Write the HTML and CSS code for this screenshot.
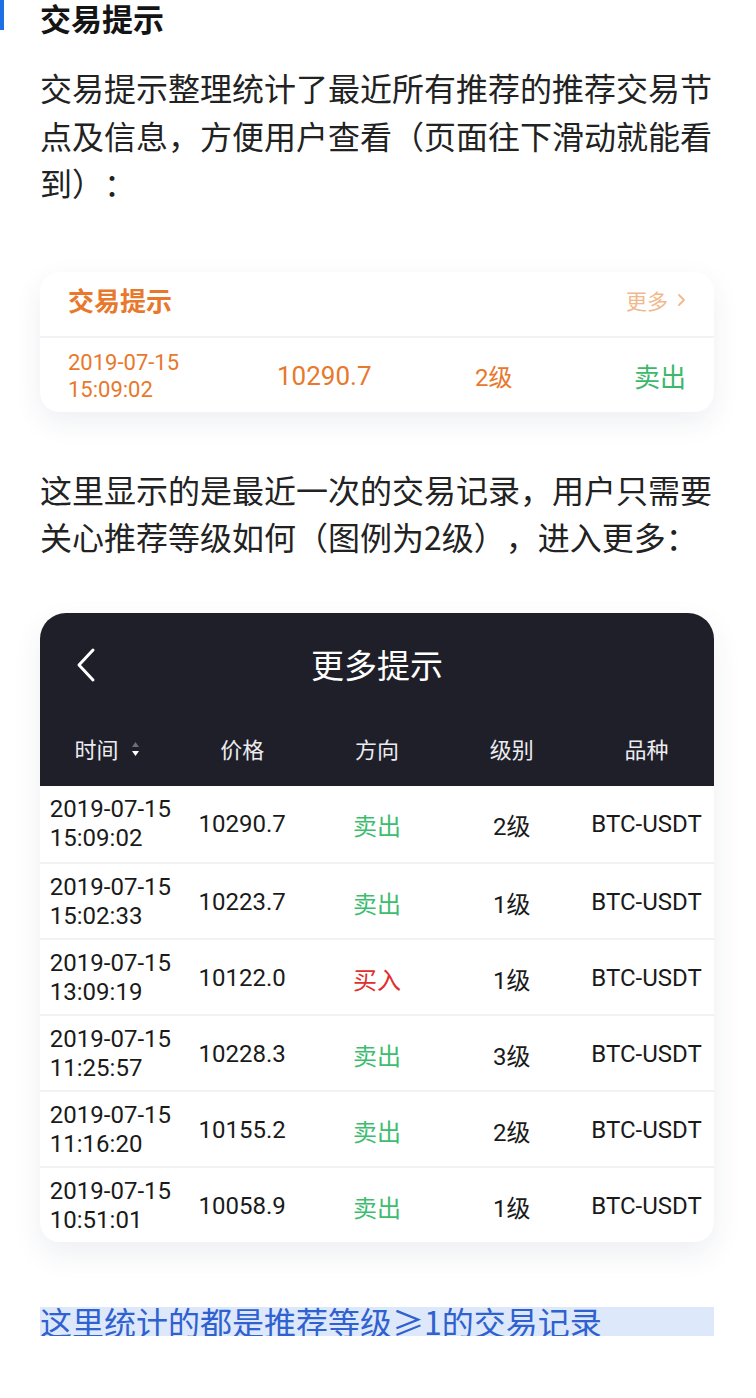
FILE: index.html
```html
<!DOCTYPE html>
<html lang="zh-CN">
<head>
<meta charset="utf-8">
<title>交易提示</title>
<link rel="stylesheet" href="styles.css">
</head>
<body>
<div class="page">
  <h2 class="section-title"><span class="title-bar"></span>交易提示</h2>
  <p class="para para-first">交易提示整理统计了最近所有推荐的推荐交易节点及信息，方便用户查看（页面往下滑动就能看到）：</p>

  <div class="tip-card">
    <div class="tip-head">
      <span class="tip-title">交易提示</span>
      <span class="tip-more">更多<svg class="more-chev" width="9" height="14" viewBox="0 0 9 14"><polyline points="2,2 7,7 2,12" fill="none" stroke="#f2b88c" stroke-width="1.8" stroke-linecap="round" stroke-linejoin="round"/></svg></span>
    </div>
    <div class="tip-row">
      <span class="tip-date">2019-07-15<br>15:09:02</span>
      <span class="tip-price">10290.7</span>
      <span class="tip-level">2级</span>
      <span class="tip-dir">卖出</span>
    </div>
  </div>

  <p class="para para-second">这里显示的是最近一次的交易记录，用户只需要关心推荐等级如何（图例为2级），进入更多：</p>

  <div class="more-card">
    <div class="more-head">
      <div class="nav-row">
        <svg class="back" width="24" height="36" viewBox="0 0 24 36"><polyline points="19,3 5,18 19,33" fill="none" stroke="#ffffff" stroke-width="3" stroke-linecap="round" stroke-linejoin="round"/></svg>
        <span class="nav-title">更多提示</span>
      </div>
      <div class="col-row">
        <span class="col">时间<svg class="sort" width="9" height="18" viewBox="0 0 9 18"><polygon points="4.5,2 8,7 1,7" fill="#6e6e78"/><polygon points="1,11 8,11 4.5,16" fill="#ffffff"/></svg></span>
        <span class="col">价格</span>
        <span class="col">方向</span>
        <span class="col">级别</span>
        <span class="col">品种</span>
      </div>
    </div>
    <div class="rows">
      <div class="row"><span class="date">2019-07-15<br>15:09:02</span><span>10290.7</span><span class="sell">卖出</span><span>2级</span><span>BTC-USDT</span></div>
      <div class="row"><span class="date">2019-07-15<br>15:02:33</span><span>10223.7</span><span class="sell">卖出</span><span>1级</span><span>BTC-USDT</span></div>
      <div class="row"><span class="date">2019-07-15<br>13:09:19</span><span>10122.0</span><span class="buy">买入</span><span>1级</span><span>BTC-USDT</span></div>
      <div class="row"><span class="date">2019-07-15<br>11:25:57</span><span>10228.3</span><span class="sell">卖出</span><span>3级</span><span>BTC-USDT</span></div>
      <div class="row"><span class="date">2019-07-15<br>11:16:20</span><span>10155.2</span><span class="sell">卖出</span><span>2级</span><span>BTC-USDT</span></div>
      <div class="row"><span class="date">2019-07-15<br>10:51:01</span><span>10058.9</span><span class="sell">卖出</span><span>1级</span><span>BTC-USDT</span></div>
    </div>
  </div>

  <div class="note">这里统计的都是推荐等级≥1的交易记录</div>
</div>
</body>
</html>
```
FILE: styles.css
```css
* { box-sizing: border-box; }
html, body {
  margin: 0;
  padding: 0;
  background: #ffffff;
}
body {
  font-family: "Noto Sans CJK SC", "Noto Sans", sans-serif;
  color: #222222;
  text-spacing-trim: space-all;
}
.page {
  width: 756px;
  padding: 0 42px 0 40px;
}
.section-title {
  position: relative;
  margin: 0;
  height: 34px;
  padding-top: 2px;
  font-size: 31px;
  line-height: 32px;
  font-weight: 700;
  color: #141414;
}
.title-bar {
  position: absolute;
  left: -40px;
  top: 0;
  width: 4px;
  height: 30px;
  background: #1e6fe6;
}
.para {
  margin: 0;
  font-size: 32px;
  line-height: 47.5px;
  color: #222222;
}
.para-first { margin-top: 30px; }
.para-second { margin-top: 54px; }

.tip-card {
  margin-top: 65px;
  background: #ffffff;
  border-radius: 20px;
  box-shadow: 0 10px 28px rgba(40, 50, 90, 0.08);
}
.tip-head {
  height: 66px;
  padding: 0 28px 8px;
  display: flex;
  align-items: center;
  justify-content: space-between;
  border-bottom: 2px solid #f3f3f5;
}
.tip-title {
  font-size: 26px;
  font-weight: 700;
  color: #e8782c;
}
.tip-more {
  display: flex;
  align-items: center;
  gap: 9px;
  font-size: 21px;
  color: #f2b88c;
}
.tip-row {
  height: 74px;
  padding: 2px 28px 0;
  display: grid;
  grid-template-columns: 209px 198px 1fr auto;
  align-items: center;
  font-family: Roboto, "Noto Sans CJK SC", sans-serif;
  color: #e8782c;
}
.tip-date {
  font-size: 22px;
  line-height: 27px;
}
.tip-price { font-size: 26px; }
.tip-level { font-size: 24px; }
.tip-dir {
  font-family: "Noto Sans CJK SC", sans-serif;
  font-size: 26px;
  color: #3db86b;
}

.more-card {
  margin-top: 52px;
  border-radius: 26px 26px 20px 20px;
  background: #ffffff;
  box-shadow: 0 12px 30px rgba(40, 50, 90, 0.08);
  overflow: hidden;
}
.more-head {
  background: #1f1f29;
  color: #ffffff;
}
.nav-row {
  position: relative;
  height: 102px;
  display: flex;
  align-items: center;
  justify-content: center;
}
.back {
  position: absolute;
  left: 34px;
  top: 34px;
}
.nav-title {
  font-size: 33px;
  color: #ffffff;
}
.col-row {
  height: 71px;
  display: grid;
  grid-template-columns: repeat(5, 1fr);
  align-items: center;
  padding-bottom: 4px;
}
.col {
  display: flex;
  align-items: center;
  justify-content: center;
  gap: 13px;
  font-size: 22px;
  color: #ececf0;
}
.sort { margin-top: 2px; }
.row {
  height: 76px;
  padding-top: 3px;
  display: grid;
  grid-template-columns: repeat(5, 1fr);
  align-items: center;
  justify-items: center;
  border-top: 2px solid #f2f2f4;
  font-family: Roboto, "Noto Sans CJK SC", sans-serif;
  font-size: 24px;
  color: #1a1a1a;
}
.row:first-child { border-top: none; padding-top: 1px; }
.date {
  text-align: left;
  line-height: 29px;
  margin-left: 6px;
}
.sell {
  font-family: "Noto Sans CJK SC", sans-serif;
  color: #3dbd6e;
}
.buy {
  font-family: "Noto Sans CJK SC", sans-serif;
  color: #e0302e;
}
.note {
  margin-top: 65px;
  height: 29px;
  line-height: 29px;
  font-size: 32px;
  color: #2f61cf;
  background: #dde8fb;
  white-space: nowrap;
}
```
